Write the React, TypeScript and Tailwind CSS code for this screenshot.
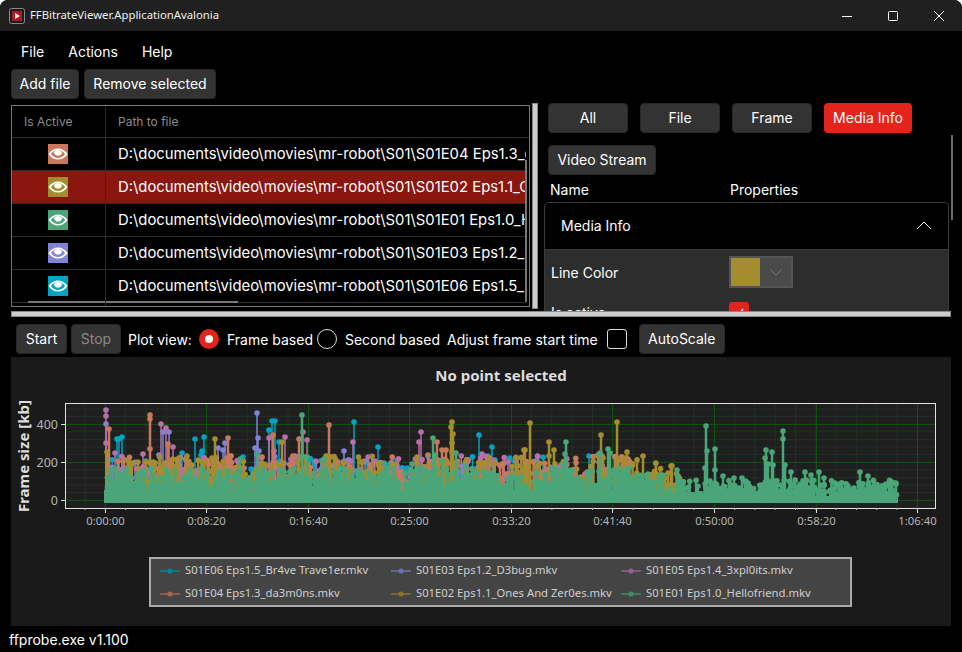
import React from "react";

const ui = "font-['Inter','Liberation_Sans',sans-serif]";

const colors = {
  teal: "#00a3c4",
  blue: "#8184d6",
  pink: "#b86fa9",
  orange: "#c9785c",
  olive: "#a38d2f",
  green: "#4aa678",
};

type Peak = [number, number];

// peaks read off the reference plot, page coordinates
const peaks: Record<keyof typeof colors, Peak[]> = {
  teal: [[117, 439], [119, 439], [122, 437], [124, 468], [182, 453], [195, 439], [204, 437], [201, 455], [202, 451], [269, 430], [272, 421], [275, 421], [279, 442], [251, 469], [243, 457], [354, 422], [378, 447], [371, 465], [367, 462], [397, 460], [479, 435], [492, 447], [488, 456], [495, 460], [514, 461], [537, 460], [589, 456]],
  blue: [[106, 424], [163, 432], [169, 432], [159, 455], [257, 413], [258, 438], [255, 448], [259, 451], [225, 443], [218, 448], [223, 450], [344, 451], [365, 461], [598, 455], [599, 462]],
  pink: [[106, 410], [106, 416], [106, 443], [115, 453], [161, 424], [166, 428], [173, 447], [143, 454], [285, 437], [269, 438], [274, 451], [295, 456], [307, 440], [303, 432], [353, 442], [421, 432], [419, 442], [397, 466], [482, 454], [508, 462], [518, 466], [616, 457]],
  orange: [[109, 429], [150, 415], [150, 419], [150, 449], [168, 444], [228, 438], [273, 435], [299, 439], [262, 457], [234, 468], [230, 456], [329, 425], [428, 455], [437, 442], [442, 450], [446, 450], [525, 450], [500, 465], [628, 459]],
  olive: [[107, 452], [215, 439], [282, 442], [212, 458], [187, 456], [179, 458], [132, 463], [138, 462], [146, 462], [153, 462], [192, 465], [283, 463], [452, 422], [451, 427], [453, 434], [452, 443], [452, 452], [530, 423], [549, 442], [554, 450], [549, 456], [601, 435], [617, 422], [627, 452], [524, 450], [603, 458], [555, 464], [643, 456], [671, 466], [668, 473]],
  green: [[302, 415], [240, 459], [257, 454], [302, 457], [307, 457], [433, 438], [435, 455], [456, 453], [442, 461], [412, 464], [384, 463], [324, 459], [566, 442], [565, 454], [608, 449], [610, 453], [600, 453], [563, 465], [466, 466], [706, 426], [707, 451], [715, 449], [715, 470], [705, 468], [766, 450], [765, 458], [772, 452], [773, 465], [768, 464], [783, 431], [783, 439], [785, 465], [791, 472], [805, 472], [811, 475], [819, 472], [824, 478], [835, 483], [860, 472], [868, 476], [886, 484], [896, 484], [723, 476], [677, 470], [678, 476], [659, 476], [663, 475], [734, 478], [742, 478]],
};

const rng = (seed: number) => () => {
  seed = (seed + 0x6d2b79f5) | 0;
  let t = Math.imul(seed ^ (seed >>> 15), 1 | seed);
  t = (t + Math.imul(t ^ (t >>> 7), 61 | t)) ^ t;
  return ((t ^ (t >>> 14)) >>> 0) / 4294967296;
};

// low frames: most sit near base, a few reach up towards base - range
const noise = (seed: number, count: number, x0: number, x1: number, base: number, range: number, skew: number): Peak[] => {
  const r = rng(seed);
  const out: Peak[] = [];
  for (let i = 0; i < count; i++) {
    out.push([x0 + r() * (x1 - x0), base - range * Math.pow(r(), skew)]);
  }
  return out;
};

const layers: { color: string; dots: Peak[]; width: number }[] = [
  { color: colors.teal, width: 1.5, dots: [...peaks.teal, ...noise(11, 70, 108, 600, 478, 22, 1.5)] },
  { color: colors.blue, width: 1.5, dots: [...peaks.blue, ...noise(22, 90, 108, 610, 478, 22, 1.5)] },
  { color: colors.pink, width: 1.5, dots: [...peaks.pink, ...noise(33, 110, 106, 625, 478, 22, 1.5)] },
  { color: colors.orange, width: 2.5, dots: [...peaks.orange, ...noise(44, 170, 106, 640, 482, 26, 1.5)] },
  { color: colors.olive, width: 2.5, dots: [...peaks.olive, ...noise(55, 260, 106, 680, 486, 30, 1.5)] },
  {
    color: colors.green,
    width: 2.5,
    dots: [
      ...peaks.green,
      ...noise(66, 560, 107, 650, 488, 20, 2),
      ...noise(77, 320, 650, 897, 495, 15, 2),
    ],
  },
];

const xTicks: [number, string][] = [
  [105, "0:00:00"],
  [206, "0:08:20"],
  [308, "0:16:40"],
  [409, "0:25:00"],
  [511, "0:33:20"],
  [612, "0:41:40"],
  [714, "0:50:00"],
  [816, "0:58:20"],
  [917, "1:06:40"],
];

const yTicks: [number, string][] = [
  [424, "400"],
  [462, "200"],
  [500, "0"],
];

const minorX = Array.from({ length: 44 }, (_, i) => 85 + i * 20.3).filter((x) => x < 935);
const minorY = Array.from({ length: 14 }, (_, i) => 409 + i * 7.6).filter((y) => y < 508);

const Plot = () => (
  <svg width={940} height={150} viewBox="11 393 940 150" className="block">
    <rect x={66} y={404} width={869} height={104} fill="#1e1f1e" />
    {minorX.map((x) => (
      <line key={x} x1={x} x2={x} y1={404} y2={508} stroke="#262e26" />
    ))}
    {minorY.map((y) => (
      <line key={y} x1={66} x2={935} y1={y} y2={y} stroke="#262e26" />
    ))}
    {xTicks.map(([x]) => (
      <line key={x} x1={x + 0.5} x2={x + 0.5} y1={404} y2={508} stroke="#0d520d" />
    ))}
    {yTicks.map(([y]) => (
      <line key={y} x1={66} x2={935} y1={y + 0.5} y2={y + 0.5} stroke="#0d520d" />
    ))}
    {layers.map((layer) => (
      <g key={layer.color} fill={layer.color} stroke={layer.color}>
        <path
          d={layer.dots.map(([x, y]) => `M${x.toFixed(1)} 503V${y.toFixed(1)}`).join("")}
          strokeWidth={layer.width}
          fill="none"
        />
        {layer.dots.map(([x, y], i) => (
          <circle key={i} cx={x} cy={y} r={2.8} stroke="none" />
        ))}
      </g>
    ))}
    <path d="M104 503V490H650V496H898V503Z" fill={colors.green} />
    <rect x={65.5} y={403.5} width={870} height={105} fill="none" stroke="#e0e0e0" />
    {xTicks.map(([x, label]) => (
      <g key={label}>
        <line x1={x + 0.5} x2={x + 0.5} y1={508} y2={513} stroke="#e0e0e0" />
        <text x={x + 0.5} y={525} textAnchor="middle" fill="#b4b4b4" fontSize={11.3} fontFamily="'Noto Sans',sans-serif">
          {label}
        </text>
      </g>
    ))}
    {minorX.map((x) => (
      <line key={x} x1={x} x2={x} y1={508} y2={510} stroke="#bbbbbb" />
    ))}
    {yTicks.map(([y, label]) => (
      <g key={label}>
        <line x1={61} x2={65} y1={y + 0.5} y2={y + 0.5} stroke="#e0e0e0" />
        <text x={58} y={y + 5} textAnchor="end" fill="#b4b4b4" fontSize={12.5} fontFamily="'Noto Sans',sans-serif">
          {label}
        </text>
      </g>
    ))}
    <text
      transform="translate(29 456) rotate(-90)"
      textAnchor="middle"
      fill="#dddddd"
      fontSize={15}
      fontWeight={700}
      fontFamily="'Noto Sans',sans-serif"
    >
      Frame size [kb]
    </text>
  </svg>
);

const Btn = ({ label, className = "" }: { label: string; className?: string }) => (
  <button className={`h-[30px] rounded-[4px] border border-[#282828] bg-[#333333] pb-[2px] text-[14px] ${className}`}>
    {label}
  </button>
);

const Eye = ({ color }: { color: string }) => (
  <svg width={20} height={20} viewBox="0 0 20 20" className="block">
    <rect width={20} height={20} fill={color} />
    <path
      fill="#fff"
      fillRule="evenodd"
      d="M0.5 10C3 6.2 6.4 4.4 10 4.4S17 6.2 19.5 10C17 13.8 13.6 15.6 10 15.6S3 13.8 0.5 10ZM2.9 10C4.8 12.6 7.2 13.9 10 13.9S15.2 12.6 17.1 10C15.2 7.4 12.8 6.1 10 6.1S4.8 7.4 2.9 10Z"
    />
    <path fill="#fff" d="M5.8 8.2C7 6.8 8.4 6 10 6S13 6.8 14.2 8.2C13.7 10.4 12 11.6 10 11.6S6.3 10.4 5.8 8.2Z" />
  </svg>
);

const files = [
  { color: colors.orange, name: "S01E04 Eps1.3_da3m0ns.mkv" },
  { color: colors.olive, name: "S01E02 Eps1.1_Ones And Zer0es.mkv", selected: true },
  { color: colors.green, name: "S01E01 Eps1.0_Hellofriend.mkv" },
  { color: colors.blue, name: "S01E03 Eps1.2_D3bug.mkv" },
  { color: colors.teal, name: "S01E06 Eps1.5_Br4ve Trave1er.mkv" },
];

const legend = [
  { color: "#00869f", name: "S01E06 Eps1.5_Br4ve Trave1er.mkv" },
  { color: "#6d70b5", name: "S01E03 Eps1.2_D3bug.mkv" },
  { color: "#99608d", name: "S01E05 Eps1.4_3xpl0its.mkv" },
  { color: "#a9654e", name: "S01E04 Eps1.3_da3m0ns.mkv" },
  { color: "#877629", name: "S01E02 Eps1.1_Ones And Zer0es.mkv" },
  { color: "#3f8c65", name: "S01E01 Eps1.0_Hellofriend.mkv" },
];

const Radio = ({ checked, className = "" }: { checked?: boolean; className?: string }) =>
  checked ? (
    <span className={`flex h-5 w-5 shrink-0 items-center justify-center rounded-full bg-[#e5231b] ${className}`}>
      <span className="h-2 w-2 rounded-full bg-white" />
    </span>
  ) : (
    <span className={`block h-5 w-5 shrink-0 rounded-full border border-[#dddddd] ${className}`} />
  );

export default function App() {
  return (
    <div className={`${ui} relative h-[652px] w-[962px] overflow-hidden rounded-t-lg bg-black text-[14px] text-white`}>
      <div className="flex h-[31px] items-center bg-[#202020]">
        <svg width={16} height={16} viewBox="0 0 16 16" className="ml-[9px]">
          <rect x={0.5} y={0.5} width={15} height={15} rx={2} fill="#1c1c20" stroke="#8a8a8a" />
          <rect x={3} y={3} width={10} height={10} fill="#a81c24" />
          <path d="M6 5L11 8L6 11Z" fill="#eeeeee" />
        </svg>
        <span className="ml-[5px] font-['Noto_Sans',sans-serif] text-[11.3px] text-[#eeeeee]">
          FFBitrateViewer.ApplicationAvalonia
        </span>
        <div className="ml-auto flex">
          <div className="flex h-[31px] w-[46px] items-center justify-center">
            <svg width={10} height={10} viewBox="0 0 10 10">
              <path d="M0 5.5H10" stroke="#fff" />
            </svg>
          </div>
          <div className="flex h-[31px] w-[46px] items-center justify-center">
            <svg width={10} height={10} viewBox="0 0 10 10">
              <rect x={0.5} y={0.5} width={9} height={9} rx={1} fill="none" stroke="#fff" />
            </svg>
          </div>
          <div className="flex h-[31px] w-[46px] items-center justify-center">
            <svg width={10} height={10} viewBox="0 0 10 10">
              <path d="M0 0L10 10M10 0L0 10" stroke="#fff" />
            </svg>
          </div>
        </div>
      </div>

      <div className="flex h-[38px] items-center gap-6 pt-[3px] pl-[21px]">
        <span>File</span>
        <span>Actions</span>
        <span>Help</span>
      </div>

      <div className="flex h-[30px] gap-[5px] pl-[11px]">
        <Btn label="Add file" className="w-[68px]" />
        <Btn label="Remove selected" className="w-[132px]" />
      </div>

      <div className="flex h-[212px]">
        <div className="relative mt-[6px] ml-[11px] h-[202px] w-[519px] overflow-hidden border border-[#777777]">
          <div className="flex h-[32px] items-center border-b border-[#2c2c2c] text-[12px] text-[#8c8c8c]">
            <div className="flex h-full w-[94px] items-center border-r border-[#2c2c2c] pl-[12px]">Is Active</div>
            <div className="pl-[12px]">Path to file</div>
          </div>
          {files.map((f) => (
            <div
              key={f.name}
              className={`flex h-[33px] w-[514px] items-center border-b border-[#2c2c2c] ${f.selected ? "bg-[#8a1610]" : ""}`}
            >
              <div className={`flex h-full w-[94px] shrink-0 items-center justify-center border-r pr-[1px] ${f.selected ? "border-[#a84a44]" : "border-[#2c2c2c]"}`}>
                <Eye color={f.color} />
              </div>
              <div className="overflow-hidden pl-[12px] text-[14.85px] whitespace-nowrap">{`D:\\documents\\video\\movies\\mr-robot\\S01\\${f.name}`}</div>
            </div>
          ))}
          <div className="absolute bottom-[3px] left-[16px] h-[2px] w-[210px] bg-[#777777]" />
          <div className="absolute top-[54px] right-[2px] h-[142px] w-[2px] bg-[#777777]" />
          <div className="absolute top-0 bottom-0 left-[93px] w-px bg-[#2c2c2c]" />
        </div>

        <div className="mt-[4px] ml-[2px] h-[206px] w-[6px] border border-[#888888] bg-[#cccccc]" />

        <div className="relative ml-[6px] h-[212px] w-[405px] overflow-hidden">
          <div className="mt-[4px] flex gap-3 pl-[4px]">
            <Btn label="All" className="w-20" />
            <Btn label="File" className="w-20" />
            <Btn label="Frame" className="w-20" />
            <button className="h-[30px] w-[88px] rounded-[4px] bg-[#e5231b] pb-[2px] text-[14px]">Media Info</button>
          </div>
          <div className="mt-3 pl-[4px]">
            <Btn label="Video Stream" className="w-[108px]" />
          </div>
          <div className="mt-[6px] flex h-[17px] items-center pl-[6px]">
            <span className="w-[180px]">Name</span>
            <span>Properties</span>
          </div>
          <div className="mt-[4px] rounded-t-[4px] border border-[#3a3a3a]">
            <div className="flex h-[47px] items-center justify-between border-b border-[#3a3a3a] px-4 pb-[2px]">
              <span>Media Info</span>
              <svg width={16} height={10} viewBox="0 0 16 10">
                <path d="M1 9L8 2L15 9" fill="none" stroke="#fff" />
              </svg>
            </div>
            <div className="h-[100px] bg-[#2d2d2d] pl-[6px]">
              <div className="flex h-[44px] items-center">
                <span className="w-[178px]">Line Color</span>
                <div className="flex h-[32px] w-[64px] border-2 border-[#555555] bg-[#4a4a4a]">
                  <div className="w-[29px] bg-[#a38d2f]" />
                  <div className="flex flex-1 items-center justify-center">
                    <svg width={14} height={8} viewBox="0 0 14 8">
                      <path d="M1 1L7 7L13 1" fill="none" stroke="#777777" />
                    </svg>
                  </div>
                </div>
              </div>
              <div className="mt-[8px] flex h-[22px] items-start">
                <span className="w-[178px]">Is active</span>
                <div className="flex h-5 w-5 items-center justify-center rounded-[3px] bg-[#e5231b]">
                  <svg width={12} height={12} viewBox="0 0 12 12">
                    <path d="M2 6.5L5 9.5L10 3" fill="none" stroke="#fff" strokeWidth={1.5} />
                  </svg>
                </div>
              </div>
            </div>
          </div>
        </div>
      </div>

      <div className="absolute top-[135px] left-[951px] h-[85px] w-[2px] bg-[#6a6a6a]" />

      <div className="ml-[11px] h-[6px] w-[940px] border border-[#888888] bg-[#cccccc]" />

      <div className="flex h-[40px] items-center pt-[4px] pl-[16px]">
        <Btn label="Start" className="w-[51px]" />
        <Btn label="Stop" className="ml-[4px] w-[50px] text-[#8a8a8a]" />
        <span className="ml-[7px]">Plot view:</span>
        <Radio checked className="ml-[7px]" />
        <span className="ml-[8px]">Frame based</span>
        <Radio className="ml-[4px]" />
        <span className="ml-[8px]">Second based</span>
        <span className="ml-[7px]">Adjust frame start time</span>
        <span className="ml-[9px] h-5 w-5 rounded-[3px] border border-[#dddddd]" />
        <Btn label="AutoScale" className="ml-3 w-[86px]" />
      </div>

      <div className="ml-[11px] h-[269px] w-[940px] bg-[#1a1a1a] font-['Noto_Sans',sans-serif]">
        <div className="flex h-[29px] items-end justify-center pl-[40px] text-[15px] font-bold text-[#dddddd]">
          No point selected
        </div>
        <div className="pt-[7px]">
          <Plot />
        </div>
        <div className="mt-[14px] ml-[138px] grid h-[50px] w-[703px] grid-cols-[231px_230px_1fr] items-center border-2 border-[#aaaaaa] bg-[#444444] pl-[9px] text-[11.25px] text-[#cfcfcf]">
          {legend.map((l) => (
            <div key={l.name} className="flex items-center whitespace-nowrap">
              <svg width={20} height={8} viewBox="0 0 20 8" className="mr-[5px] shrink-0">
                <path d="M0 4H20" stroke={l.color} strokeWidth={1.5} />
                <circle cx={10} cy={4} r={2.6} fill={l.color} />
              </svg>
              {l.name}
            </div>
          ))}
        </div>
      </div>

      <div className="flex h-[26px] items-center pl-[9px]">ffprobe.exe v1.100</div>
    </div>
  );
}
